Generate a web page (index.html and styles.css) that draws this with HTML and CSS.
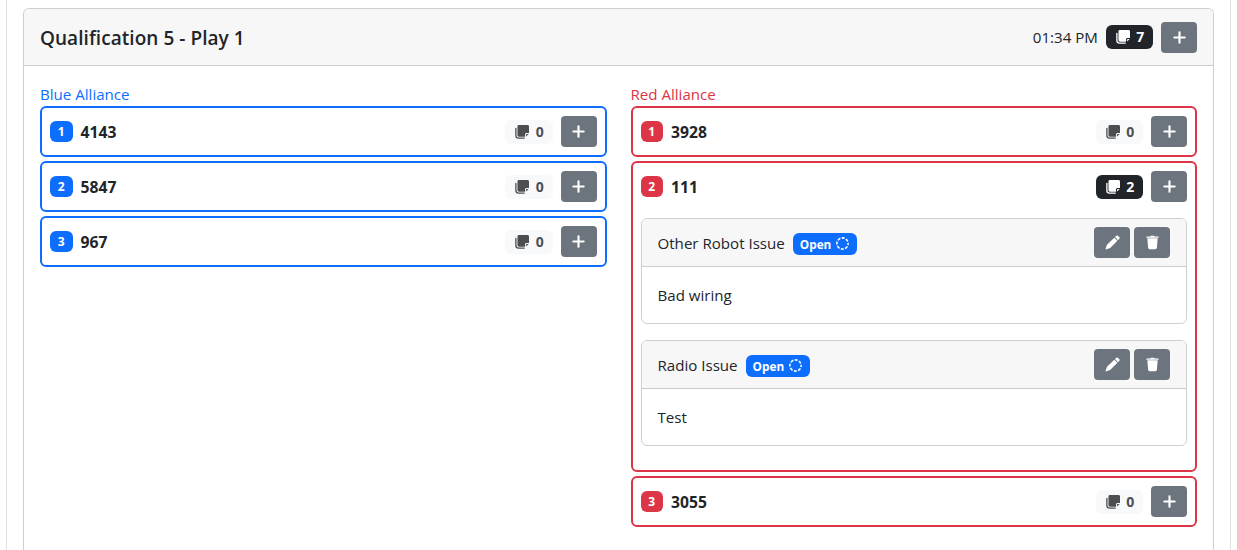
FILE: index.html
```
<!DOCTYPE html>
<html lang="en">
<head>
    <meta charset="UTF-8">
    <meta name="viewport" content="width=device-width, initial-scale=1.0">
    <title>Match Notes</title>
    <link rel="stylesheet" href="styles.css">
</head>
<body>

    <!-- Icons -->
    <svg width="0" height="0" class="sprite">
        <symbol id="plus" viewBox="0 0 16 16">
            <path d="M8 2.500v11M2.500 8h11" fill="none" stroke="currentColor" stroke-width="2.300" stroke-linecap="round"/>
        </symbol>
        <symbol id="stack" viewBox="0 0 16 16">
            <path d="M1 4v8a3 3 0 0 0 3 3h6.500" fill="none" stroke="currentColor" stroke-width="1.500" stroke-linecap="round"/>
            <path d="M4.500 0h9.500A1.800 1.800 0 0 1 16 1.800v7.400H13a1.500 1.500 0 0 0-1.500 1.500V13.500H4.500a1.700 1.700 0 0 1-1.700-1.700V1.700A1.700 1.700 0 0 1 4.500 0zM12.600 13.200V11a.8.8 0 0 1 .8-.8h2.300z"/>
        </symbol>
        <symbol id="pencil" viewBox="0 0 16 16">
            <path d="M11.800 1a1.600 1.600 0 0 1 2.300 0l1 1a1.600 1.600 0 0 1 0 2.300l-1.200 1.200-3.300-3.300zM9.900 2.900l3.300 3.300-7.700 7.700-4 1.400a.6.6 0 0 1-.8-.8l1.400-4z"/>
        </symbol>
        <symbol id="trash" viewBox="0 0 16 16">
            <path d="M5.500 1.500 6.200.7h3.600l.7.8H14a.7.7 0 0 1 0 1.500H2a.7.7 0 0 1 0-1.500zM2.500 3.500h11l-.8 10.200a1.700 1.700 0 0 1-1.700 1.500H5a1.700 1.700 0 0 1-1.700-1.500z"/>
        </symbol>
        <symbol id="open" viewBox="0 0 16 16">
            <circle cx="8" cy="8" r="6.900" fill="none" stroke="currentColor" stroke-width="1.900" stroke-dasharray="3.700 1.719" stroke-dashoffset="1.850"/>
        </symbol>
    </svg>

    <div class="page">
        <div class="card match">
            <div class="card-header match-header">
                <h5>Qualification 5 - Play 1</h5>
                <div class="actions">
                    <span class="time">01:34 PM</span>
                    <span class="count dark"><svg><use href="#stack"/></svg>7</span>
                    <button class="btn"><svg><use href="#plus"/></svg></button>
                </div>
            </div>

            <div class="alliances">
                <div class="alliance blue">
                    <div class="alliance-name">Blue Alliance</div>
                    <div class="team">
                        <div class="team-row">
                            <span class="badge">1</span>
                            <b>4143</b>
                            <div class="actions">
                                <span class="count"><svg><use href="#stack"/></svg>0</span>
                                <button class="btn"><svg><use href="#plus"/></svg></button>
                            </div>
                        </div>
                    </div>
                    <div class="team">
                        <div class="team-row">
                            <span class="badge">2</span>
                            <b>5847</b>
                            <div class="actions">
                                <span class="count"><svg><use href="#stack"/></svg>0</span>
                                <button class="btn"><svg><use href="#plus"/></svg></button>
                            </div>
                        </div>
                    </div>
                    <div class="team">
                        <div class="team-row">
                            <span class="badge">3</span>
                            <b>967</b>
                            <div class="actions">
                                <span class="count"><svg><use href="#stack"/></svg>0</span>
                                <button class="btn"><svg><use href="#plus"/></svg></button>
                            </div>
                        </div>
                    </div>
                </div>

                <div class="alliance red">
                    <div class="alliance-name">Red Alliance</div>
                    <div class="team">
                        <div class="team-row">
                            <span class="badge">1</span>
                            <b>3928</b>
                            <div class="actions">
                                <span class="count"><svg><use href="#stack"/></svg>0</span>
                                <button class="btn"><svg><use href="#plus"/></svg></button>
                            </div>
                        </div>
                    </div>
                    <div class="team">
                        <div class="team-row">
                            <span class="badge">2</span>
                            <b>111</b>
                            <div class="actions">
                                <span class="count dark"><svg><use href="#stack"/></svg>2</span>
                                <button class="btn"><svg><use href="#plus"/></svg></button>
                            </div>
                        </div>
                        <div class="card note">
                            <div class="card-header">
                                <span class="issue">Other Robot Issue</span>
                                <span class="status">Open <svg><use href="#open"/></svg></span>
                                <div class="actions note-actions">
                                    <button class="btn"><svg><use href="#pencil"/></svg></button>
                                    <button class="btn"><svg><use href="#trash"/></svg></button>
                                </div>
                            </div>
                            <div class="note-body">Bad wiring</div>
                        </div>
                        <div class="card note">
                            <div class="card-header">
                                <span class="issue">Radio Issue</span>
                                <span class="status">Open <svg><use href="#open"/></svg></span>
                                <div class="actions note-actions">
                                    <button class="btn"><svg><use href="#pencil"/></svg></button>
                                    <button class="btn"><svg><use href="#trash"/></svg></button>
                                </div>
                            </div>
                            <div class="note-body">Test</div>
                        </div>
                    </div>
                    <div class="team">
                        <div class="team-row">
                            <span class="badge">3</span>
                            <b>3055</b>
                            <div class="actions">
                                <span class="count"><svg><use href="#stack"/></svg>0</span>
                                <button class="btn"><svg><use href="#plus"/></svg></button>
                            </div>
                        </div>
                    </div>
                </div>
            </div>
        </div>
    </div>

</body>
</html>
```

FILE: styles.css
```
* {
    box-sizing: border-box;
}

body {
    margin: 0;
    background-color: #fff;
    color: #212529;
    font-family: "Segoe UI", "Open Sans", "Noto Sans", sans-serif;
    font-size: 15.1px;
    line-height: 24px;
}

svg {
    display: block;
    fill: currentColor;
}

.sprite {
    position: absolute;
}

.page {
    height: 550px;
    margin: 0 6px;
    padding: 8px 16px 0;
    border: solid #dee2e6;
    border-width: 0 1px;
}

.card {
    border: 1px solid #cfcfcf;
    border-radius: 6px;
    background-color: #fff;
}

.match {
    height: 542px;
    border-bottom: none;
    border-radius: 6px 6px 0 0;
}

.card-header {
    display: flex;
    align-items: center;
    padding: 8px 16px;
    background-color: #f7f7f7;
    border-bottom: 1px solid #cbcbcb;
    border-radius: 5px 5px 0 0;
}

.match-header {
    height: 57px;
}

h5 {
    margin: 2px 0 0;
    font-size: 19px;
    font-weight: 600;
    letter-spacing: 0.05px;
}

.actions {
    display: flex;
    align-items: center;
    gap: 8px;
    margin-left: auto;
}

.note-actions {
    gap: 4px;
}

.btn {
    display: flex;
    align-items: center;
    justify-content: center;
    width: 35.8px;
    height: 31px;
    padding: 0;
    border: none;
    border-radius: 4px;
    background-color: #6c757d;
    color: #fff;
}

.btn svg {
    width: 15px;
    height: 15px;
}

.count {
    display: flex;
    align-items: center;
    justify-content: space-between;
    width: 47.3px;
    height: 24px;
    padding: 0 9px 0 10px;
    border-radius: 6px;
    background-color: #f8f9fa;
    color: #4c4f52;
    font-size: 14px;
    font-weight: 700;
}

.count svg {
    width: 14px;
    height: 14px;
}

.count.dark {
    background-color: #212529;
    color: #fff;
}

.alliances {
    display: grid;
    grid-template-columns: 1fr 1fr;
    gap: 24px;
    padding: 16px;
}

.alliance {
    display: flex;
    flex-direction: column;
    gap: 4px;
}

.alliance-name {
    margin-bottom: -4px;
}

.blue .alliance-name {
    color: #0d6efd;
}

.red .alliance-name {
    color: #dc3545;
}

.team {
    padding: 8px;
    border: 2px solid #0d6efd;
    border-radius: 6px;
}

.red .team {
    border-color: #dc3545;
}

.team-row {
    display: flex;
    align-items: center;
}

.team-row b {
    margin-left: 8px;
    font-size: 15.7px;
}

.badge {
    width: 22.5px;
    height: 21px;
    border-radius: 6px;
    background-color: #0d6efd;
    color: #fff;
    font-size: 12px;
    font-weight: 700;
    line-height: 22px;
    text-align: center;
}

.red .badge {
    background-color: #dc3545;
}

.note {
    margin: 16px 0;
}

.status {
    display: flex;
    align-items: center;
    justify-content: space-between;
    width: 64px;
    height: 22px;
    margin: 2px 0 0 8px;
    padding: 0 8px 0 7px;
    border-radius: 6px;
    background-color: #0d6efd;
    color: #fff;
    font-size: 11.8px;
    font-weight: 700;
}

.status svg {
    width: 13px;
    height: 13px;
}

.note-body {
    padding: 16px;
}
```
